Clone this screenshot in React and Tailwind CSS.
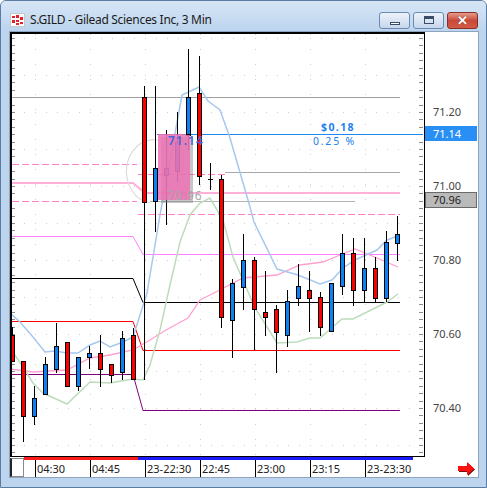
import React from "react";

// price -> y inside the page (71.20 sits at y=112, 370px per dollar)
const py = (p) => 112 + (71.2 - p) * 370;

// [color, bodyTop, bodyBottom, wickTop, wickBottom]
const candles = [
  ["r", 335, 361, 327, 361],
  ["r", 361, 416, 361, 442],
  ["b", 398, 416, 386, 425],
  ["b", 364, 394, 357, 394],
  ["b", 346, 369, 323, 373],
  ["r", 342, 386, 342, 386],
  ["b", 357, 386, 357, 391],
  ["b", 353, 357, 346, 369],
  ["r", 353, 369, 335, 387],
  ["r", 364, 375, 364, 383],
  ["b", 338, 372, 331, 380],
  ["r", 335, 379, 328, 379],
  ["r", 97, 202, 86, 380],
  ["b", 168, 201, 86, 232],
  ["b", 168, 175, 130, 225],
  ["b", 142, 171, 112, 182],
  ["b", 97, 135, 49, 150],
  ["r", 93, 176, 56, 185],
  ["d", 179, 179, 163, 190],
  ["r", 179, 317, 175, 328],
  ["b", 283, 320, 279, 358],
  ["b", 260, 287, 234, 310],
  ["r", 260, 309, 257, 350],
  ["r", 312, 317, 271, 336],
  ["r", 309, 332, 305, 373],
  ["b", 301, 335, 290, 347],
  ["b", 286, 298, 264, 306],
  ["r", 290, 298, 271, 332],
  ["r", 297, 327, 292, 336],
  ["b", 283, 331, 283, 331],
  ["b", 253, 286, 234, 295],
  ["r", 253, 290, 238, 306],
  ["b", 268, 290, 238, 302],
  ["r", 268, 298, 257, 302],
  ["b", 242, 298, 231, 302],
  ["b", 234, 243, 216, 261],
];

const blueMa =
  "10,313 20,322 33,337 45,352 55,351 67,353 78,353 90,345 100,341 110,347 123,342 133,337 140,315 147,293 160,215 172,150 182,95 199,87 208,101 220,110 230,138 248,200 254,222 277,269 298,275 320,284 332,280 343,268 355,260 377,250 387,240 398,236";
const greenMa =
  "10,348 23,367 33,383 43,393 67,404 90,382 110,383 133,379 143,380 150,365 160,330 170,285 180,242 190,215 200,203 210,198 223,220 233,257 255,308 277,343 297,342 310,338 320,338 342,319 353,319 377,307 387,302 398,294";
const pinkMa =
  "10,369 33,372 67,370 90,358 110,355 133,350 150,340 166,330 188,318 200,300 210,295 243,278 277,275 300,265 323,262 340,255 355,249 377,258 398,267";

const priceLabels = ["71.20", "71.00", "70.80", "70.60", "70.40"];
const timeLabels = ["04:30", "04:45", "23-22:30", "22:45", "23:00", "23:15", "23-23:30"];

function Chart() {
  const ticks = [];
  for (let i = 0; i <= 57; i++) ticks.push(py(70.26 + i * 0.02));
  const rows = [];
  for (let k = 0; k < 12; k++) rows.push(38 + 37 * k);
  const cols = [35, 90, 145, 200, 255, 310, 365];

  return (
    <svg width="411" height="422" viewBox="12 34 411 422" className="block">
      {/* dotted grid */}
      {rows.map((r) => (
        <line key={"r" + r} x1="12" x2="423" y1={r + 0.5} y2={r + 0.5} stroke="#cfcfcf" strokeDasharray="1 10" strokeDashoffset="-1" />
      ))}
      {cols.map((c) => (
        <line key={"c" + c} x1={c + 0.5} x2={c + 0.5} y1="34" y2="456" stroke="#cfcfcf" strokeDasharray="1 14" />
      ))}
      {/* edge ticks */}
      {ticks.map((t, i) => (
        <g key={"t" + i} stroke="#8c8c8c">
          <line x1="12" x2="15" y1={Math.round(t) + 0.5} y2={Math.round(t) + 0.5} />
          <line x1="419" x2="423" y1={Math.round(t) + 0.5} y2={Math.round(t) + 0.5} />
        </g>
      ))}

      {/* level lines */}
      <g fill="none" shapeRendering="crispEdges">
        <line x1="12" x2="400" y1="97.5" y2="97.5" stroke="#a0a0a0" />
        <line x1="225" x2="400" y1="172.5" y2="172.5" stroke="#a8a8a8" />
        <line x1="150" x2="355" y1="201.5" y2="201.5" stroke="#b4b4b4" />
        <line x1="12" x2="137" y1="164.5" y2="164.5" stroke="#ff80c8" strokeDasharray="7 3" />
        <line x1="12" x2="137" y1="201.5" y2="201.5" stroke="#ff80c8" strokeDasharray="7 3" />
        <line x1="138" x2="225" y1="174.5" y2="174.5" stroke="#ff80c8" strokeDasharray="7 3" />
        <line x1="138" x2="400" y1="214.5" y2="214.5" stroke="#ff80c8" strokeDasharray="7 3" />
      </g>
      <polyline points="12,183 133,183 145,193 400,193" fill="none" stroke="#ffb0d8" strokeWidth="2" />
      <polyline points="12,236.5 133,236.5 143,254.5 400,254.5" fill="none" stroke="#ff80ff" />
      <polyline points="12,278.5 133,278.5 143,302.5 400,302.5" fill="none" stroke="#000" />
      <polyline points="12,321.5 133,321.5 143,350.5 400,350.5" fill="none" stroke="#ff0000" />
      <polyline points="12,374.5 133,374.5 143,410.5 400,410.5" fill="none" stroke="#800080" />
      <line x1="157" x2="423" y1="134.5" y2="134.5" stroke="#1e88f0" />

      {/* moving averages */}
      <polyline points={pinkMa} fill="none" stroke="#ffa0d0" strokeWidth="1.3" />
      <polyline points={greenMa} fill="none" stroke="#bcdcbc" strokeWidth="1.5" />
      <polyline points={blueMa} fill="none" stroke="#a6c8ee" strokeWidth="1.5" />

      {/* faint arc of the drawing tool */}
      <path d="M158 140 A26 30 0 0 0 150 203" fill="none" stroke="#dcdcdc" strokeWidth="1.2" />

      {/* candles */}
      {candles.map(([c, bt, bb, wt, wb], i) => {
        const cx = 12.5 + 11 * i;
        return (
          <g key={i}>
            <line x1={cx} x2={cx} y1={wt} y2={wb} stroke="#000" />
            {c === "d" ? (
              <line x1={cx - 2.5} x2={cx + 2.5} y1={bt + 0.5} y2={bt + 0.5} stroke="#000" />
            ) : (
              <rect x={cx - 2} y={bt + 0.5} width="4" height={bb - bt} fill={c === "r" ? "#ff0000" : "#0d80f2"} stroke="#000" />
            )}
          </g>
        );
      })}

      {/* range box drawing */}
      <rect x="161" y="137" width="32" height="66" fill="#808080" opacity="0.45" />
      <rect x="158" y="134" width="32" height="66" fill="#ee72b4" opacity="0.86" />
      <rect x="186.5" y="97.5" width="4" height="37" fill="#0d80f2" stroke="#000" />
      <text x="168" y="145" fontSize="12" fontWeight="600" fontFamily="Noto Sans, sans-serif" fill="#4a62d6" letterSpacing="1">
        71.14
      </text>
      <text x="167" y="200" fontSize="12" fontFamily="Noto Sans, sans-serif" fill="#a8a8a8" letterSpacing="1">
        70.96
      </text>

      {/* change readout */}
      <text x="355" y="130.5" textAnchor="end" fontSize="10.5" fontWeight="700" fontFamily="Noto Sans, sans-serif" fill="#1e80f0" letterSpacing="1.4">
        $0.18
      </text>
      <text x="356" y="145" textAnchor="end" fontSize="10.5" fontFamily="Noto Sans, sans-serif" fill="#1e80f0" letterSpacing="1.8">
        0.25 %
      </text>
    </svg>
  );
}

function AppIcon() {
  return (
    <svg width="15" height="14" viewBox="0 0 15 14" className="shrink-0">
      <rect x="0.5" y="0.5" width="14" height="13" fill="#fff" stroke="#c8c8c8" />
      <g fill="#e0202a">
        <rect x="2" y="3" width="3" height="2" />
        <rect x="6" y="2" width="3" height="3" />
        <rect x="10" y="4" width="3" height="3" />
        <rect x="2" y="7" width="3" height="3" />
        <rect x="6" y="7" width="3" height="2" />
        <rect x="10" y="9" width="3" height="2" />
        <rect x="6" y="10" width="3" height="2" />
      </g>
    </svg>
  );
}

export default function App() {
  return (
    <div className="w-[487px] h-[488px] flex flex-col bg-[#bcd4ee] border border-[#5a7ca3] rounded-t-[6px] overflow-hidden font-['Noto_Sans',sans-serif]">
      {/* title bar */}
      <div className="h-[30px] pt-[8px] pl-[9px] pr-[8px] flex items-center bg-linear-to-b from-[#d7e6f6] to-[#bcd4ee]">
        <AppIcon />
        <span className="ml-[5px] text-[12px] tracking-[-0.3px] text-[#1b1b1b] leading-none">S.GILD - Gilead Sciences Inc, 3 Min</span>
        <div className="ml-auto flex gap-[3px]">
          <button className="w-[31px] h-[17px] rounded-[3px] border border-[#6d8bb0] bg-linear-to-b from-[#eef3fa] to-[#c5d6eb] flex items-end justify-center pb-[3px]">
            <span className="w-[10px] h-[3px] bg-white border border-[#3a4c66]" />
          </button>
          <button className="w-[31px] h-[17px] rounded-[3px] border border-[#6d8bb0] bg-linear-to-b from-[#eef3fa] to-[#c5d6eb] flex items-center justify-center">
            <span className="w-[10px] h-[8px] border border-[#3a4c66] border-t-[3px] bg-transparent" />
          </button>
          <button className="w-[31px] h-[17px] rounded-[3px] border border-[#8a2f24] bg-linear-to-b from-[#e49a8c] via-[#c9493a] to-[#d35a45] flex items-center justify-center text-white text-[13px] font-bold leading-none [text-shadow:0_0_1px_#5a1a10]">
            ✕
          </button>
        </div>
      </div>

      {/* client area */}
      <div className="ml-[8px] mr-[7px] mb-[9px] border border-[#8ea5c1] bg-white flex flex-col w-[470px] h-[447px]">
        <div className="flex h-[425px]">
          <div className="w-[415px] h-[425px] border-l-2 border-t-2 border-r border-b border-black">
            <Chart />
          </div>
          <div className="relative w-[53px] h-[425px] text-[11px] text-[#444]">
            {priceLabels.map((p) => (
              <span key={p} className="absolute left-[8px] leading-[14px]" style={{ top: py(Number(p)) - 32 - 7 }}>
                {p}
              </span>
            ))}
            <div className="absolute left-0 top-[94px] w-[52px] h-[15px] bg-[#2a8ff5] text-white leading-[15px] pl-[8px]">71.14</div>
            <div className="absolute left-0 top-[160px] w-[52px] h-[16px] bg-[#bababa] border border-[#6a6a6a] text-[#1e1e1e] leading-[14px] pl-[7px]">70.96</div>
          </div>
        </div>
        <div className="flex h-[20px]">
          <div className="w-[14px] h-[19px] mt-[1px] border border-[#8a8a8a] border-l-2 border-l-[#222] bg-white" />
          <div className="flex flex-col">
            <div className="flex h-[3px]">
              <div className="w-[114px] bg-[#ff1a1a]" />
              <div className="w-[275px] bg-[#1a1aff]" />
            </div>
            <div className="flex h-[17px]">
              <div className="w-[11px]" />
              {timeLabels.map((t) => (
                <div key={t} className="w-[55px] border-l border-black pl-[1px] text-[11px] leading-[17px] text-[#222]">
                  {t}
                </div>
              ))}
            </div>
          </div>
          <svg width="19" height="15" viewBox="0 0 19 15" className="ml-auto mr-[2px] mt-[4px]">
            <polygon points="1,5 10,5 10,1 17,7.5 10,14 10,10 1,10" fill="#7a1010" transform="translate(1,1)" />
            <polygon points="1,5 10,5 10,1 17,7.5 10,14 10,10 1,10" fill="#ff1010" />
          </svg>
        </div>
      </div>
    </div>
  );
}
